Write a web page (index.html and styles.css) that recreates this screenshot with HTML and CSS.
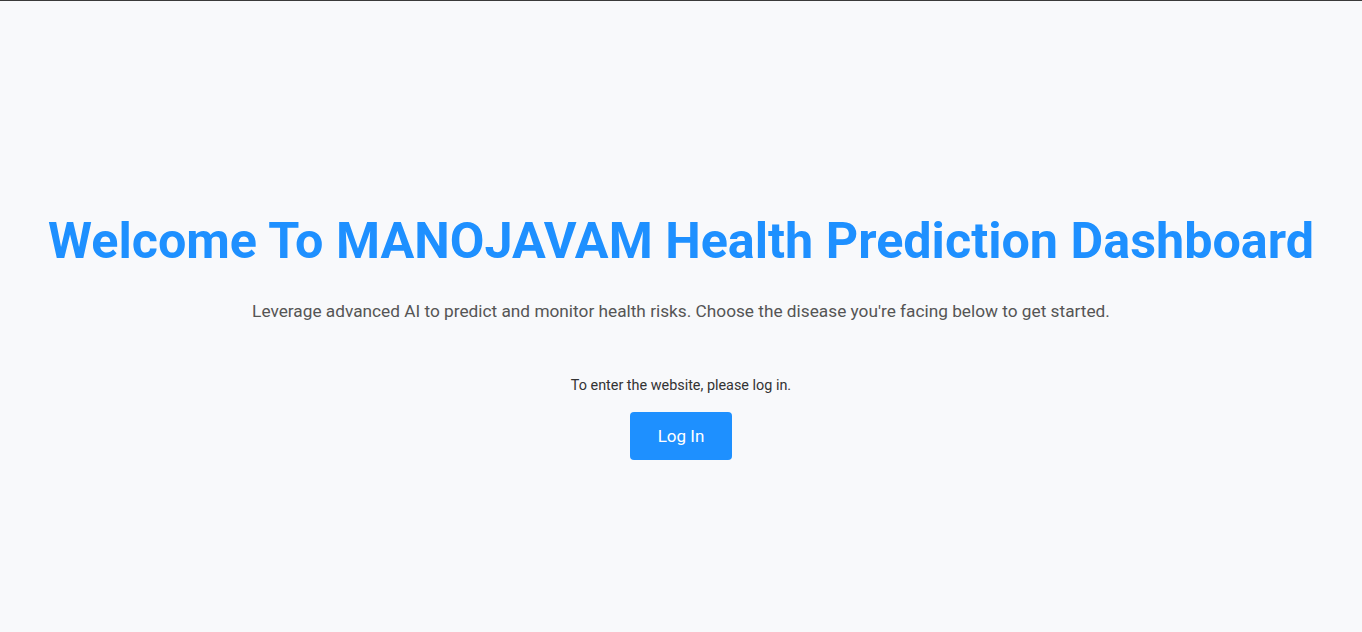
FILE: index.html
```html
<!DOCTYPE html>
<html lang="en">
<head>
<meta charset="utf-8">
<title>MANOJAVAM Health Prediction Dashboard</title>
<link rel="stylesheet" href="styles.css">
</head>
<body>
<main class="page">
  <section class="hero">
    <h1 class="title">Welcome To MANOJAVAM Health Prediction Dashboard</h1>
    <p class="lead">Leverage advanced AI to predict and monitor health risks. Choose the disease you're facing below to get started.</p>
    <div class="login">
      <p class="login-note">To enter the website, please log in.</p>
      <button class="login-btn" type="button">Log In</button>
    </div>
  </section>
</main>
</body>
</html>
```
FILE: styles.css
```css
html, body {
  margin: 0;
  padding: 0;
  height: 100%;
}
body {
  background: #f8f9fb;
  font-family: Roboto, "Liberation Sans", sans-serif;
  border-top: 1px solid #3a3a3a;
  box-sizing: border-box;
}
.page {
  box-sizing: border-box;
  height: 100%;
  padding-top: 38px;
  display: flex;
  align-items: center;
  justify-content: center;
}
.hero {
  display: flex;
  flex-direction: column;
  align-items: center;
  text-align: center;
}
.title {
  margin: 0;
  font-size: 50.3px;
  font-weight: 700;
  color: #1e90ff;
  line-height: 1.2;
}
.lead {
  margin: 29px 0 0;
  font-size: 17.25px;
  color: #555;
}
.login {
  margin-top: 56px;
  display: flex;
  flex-direction: column;
  align-items: center;
}
.login-note {
  margin: 0;
  font-size: 14.4px;
  color: #333;
}
.login-btn {
  margin-top: 18px;
  width: 102px;
  height: 48px;
  border: none;
  border-radius: 4px;
  background: #1e90ff;
  color: #fff;
  font-family: Roboto, "Liberation Sans", sans-serif;
  font-size: 17px;
}
```
